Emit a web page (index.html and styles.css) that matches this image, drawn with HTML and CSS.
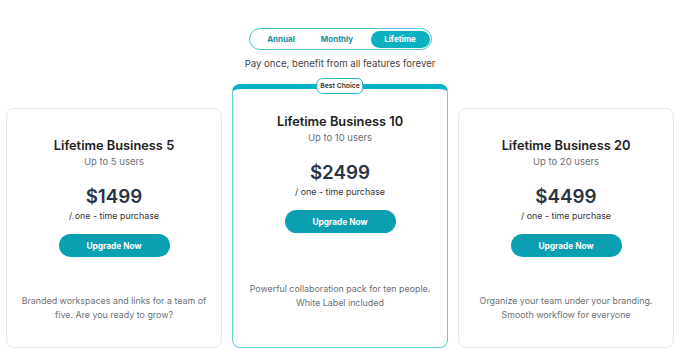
FILE: index.html
```html
<!DOCTYPE html>
<html>
<head>
<meta charset="utf-8">
<link rel="stylesheet" href="styles.css">
</head>
<body>
<div class="page">
  <div class="toggle">
    <span class="tab">Annual</span>
    <span class="tab">Monthly</span>
    <span class="tab active">Lifetime</span>
  </div>
  <p class="lead">Pay once, benefit from all features forever</p>
  <div class="plans">
    <div class="card">
      <h2 class="title">Lifetime Business 5</h2>
      <div class="users">Up to 5 users</div>
      <div class="price">$1499</div>
      <div class="per">/ one - time purchase</div>
      <button class="btn">Upgrade Now</button>
      <p class="desc">Branded workspaces and links for a team of<br>five. Are you ready to grow?</p>
    </div>
    <div class="card featured">
      <span class="badge">Best Choice</span>
      <h2 class="title">Lifetime Business 10</h2>
      <div class="users">Up to 10 users</div>
      <div class="price">$2499</div>
      <div class="per">/ one - time purchase</div>
      <button class="btn">Upgrade Now</button>
      <p class="desc">Powerful collaboration pack for ten people.<br>White Label included</p>
    </div>
    <div class="card">
      <h2 class="title">Lifetime Business 20</h2>
      <div class="users">Up to 20 users</div>
      <div class="price">$4499</div>
      <div class="per">/ one - time purchase</div>
      <button class="btn">Upgrade Now</button>
      <p class="desc">Organize your team under your branding.<br>Smooth workflow for everyone</p>
    </div>
  </div>
</div>
</body>
</html>
```
FILE: styles.css
```css
* { box-sizing: border-box; }
html, body { margin: 0; padding: 0; background: #fff; }
body { font-family: Inter, "Noto Sans", sans-serif; color: #222; }
.page { padding: 28px 7px 0 6px; display: flex; flex-direction: column; align-items: center; }
.toggle {
  display: flex; align-items: center;
  width: 183px; height: 22px;
  border: 1.5px solid #4fc4d0; border-radius: 11px;
  padding: 0 1.5px 0 8px;
  margin-left: 1px;
}
.tab {
  font-size: 8px; font-weight: 700; color: #1b8d9c;
  height: 17px; line-height: 17px; text-align: center;
}
.tab:nth-child(1) { width: 46px; }
.tab:nth-child(2) { width: 66px; }
.tab.active { width: 59px; background: #0db0c1; color: #fff; border-radius: 9px; margin-left: auto; }
.lead { margin: 7px 0 0; font-size: 9.6px; color: #444; line-height: 14px; }
.plans {
  width: 100%; margin-top: 13px;
  display: flex; align-items: flex-end; gap: 10px;
}
.card {
  position: relative; flex: 1;
  height: 240px;
  border: 1px solid #e2e8ec; border-radius: 8px;
  display: flex; flex-direction: column; align-items: center;
  padding-top: 28px; text-align: center;
}
.card.featured {
  height: 264px;
  border: 1.5px solid #5fd0db; border-top: 5px solid #00b2c3;
  padding-top: 24px;
}
.badge {
  position: absolute; top: -11px; left: 50%; transform: translateX(-50%);
  font-size: 6.8px; font-weight: 600; color: #333;
  background: #fff; border: 1.5px solid #1fb6c6; border-radius: 6px;
  padding: 0 3px; height: 16px; line-height: 13px; white-space: nowrap;
}
.title { margin: 0; font-size: 12.8px; font-weight: 600; line-height: 18px; color: #222; }
.users { font-size: 9.5px; color: #6b6f76; line-height: 13px; margin-top: 0; }
.price { font-size: 18.8px; font-weight: 600; color: #2b3440; line-height: 24px; margin-top: 17px; }
.per { font-size: 8.9px; color: #333; line-height: 12px; margin-top: 1px; }
.btn {
  margin-top: 12px; width: 111px; height: 23px; border: 0; border-radius: 12px;
  background: #0a9fb1; color: #fff; font-family: inherit; font-size: 8.3px; font-weight: 700;
  padding: 0; cursor: pointer;
}
.desc { margin: 37px 0 0; padding: 0 6px; font-size: 8.9px; line-height: 13.5px; color: #6b6f76; white-space: nowrap; }
.featured .desc { margin-top: 49px; }
```
